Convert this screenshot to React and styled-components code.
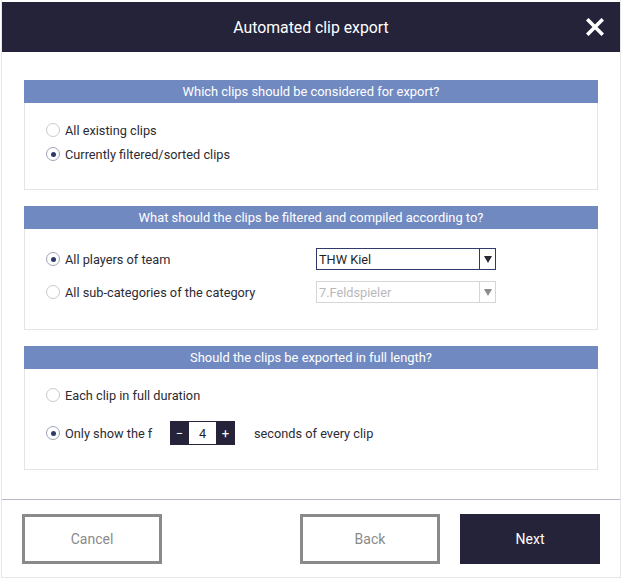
import React from 'react'
import styled, { createGlobalStyle } from 'styled-components'

const GlobalStyle = createGlobalStyle`
  body {
    margin: 0;
    background: #fff;
    font-family: Roboto, "Liberation Sans", Arial, sans-serif;
  }
`

const Dialog = styled.div`
  width: 620px;
  margin: 0 1px;
  box-sizing: border-box;
  border: 1px solid #e6e6e9;
  border-top: none;
  display: flex;
  flex-direction: column;
  background: #fff;
`

const TitleBar = styled.header`
  flex: none;
  margin-top: 2px;
  height: 50px;
  background: #24233a;
  color: #fff;
  display: flex;
  align-items: center;
  justify-content: center;
  position: relative;
  font-size: 15.8px;
`

const CloseButton = styled.button`
  position: absolute;
  right: 16px;
  top: 16px;
  width: 18px;
  height: 18px;
  padding: 0;
  border: none;
  background: none;
  cursor: pointer;
`

const Content = styled.div`
  padding: 28px 22px 0;
  display: flex;
  flex-direction: column;
  gap: 16px;
`

const Section = styled.section`
  display: flex;
  flex-direction: column;
`

const SectionTitle = styled.div`
  height: 23px;
  background: #7189c1;
  color: #fff;
  font-size: 12.9px;
  display: flex;
  align-items: center;
  justify-content: center;
`

const SectionBody = styled.div`
  border: 1px solid #e4e4e6;
  border-top: none;
  padding: ${p => p.$pad};
  display: flex;
  flex-direction: column;
  gap: ${p => p.$gap}px;
`

const Row = styled.div`
  display: flex;
  align-items: center;
  height: ${p => p.$h || 24}px;
  font-size: 12.75px;
  color: #2b2b33;
`

const Radio = styled.span`
  width: 14px;
  height: 14px;
  border-radius: 50%;
  box-sizing: border-box;
  border: 1px solid ${p => (p.$on ? '#9da3b8' : '#c9c9cf')};
  margin-left: 21px;
  margin-right: 5px;
  display: flex;
  align-items: center;
  justify-content: center;
  flex: none;

  &::after {
    content: '';
    width: 5px;
    height: 5px;
    border-radius: 50%;
    background: #2f3a6b;
    display: ${p => (p.$on ? 'block' : 'none')};
  }
`

const Label = styled.span`
  width: ${p => (p.$w ? `${p.$w}px` : 'auto')};
  flex: none;
`

const Select = styled.div`
  width: 180px;
  height: 22px;
  box-sizing: border-box;
  border: 1px solid ${p => (p.$disabled ? '#d6d6d8' : '#2f3a6b')};
  display: flex;
  align-items: center;
  font-size: 12.75px;
  color: ${p => (p.$disabled ? '#b8b8bc' : '#1f1f26')};
`

const SelectText = styled.span`
  flex: 1;
  padding-left: 2px;
`

const SelectArrow = styled.span`
  width: 15px;
  height: 100%;
  border-left: 1px solid ${p => (p.$disabled ? '#d6d6d8' : '#2f3a6b')};
  display: flex;
  align-items: center;
  justify-content: center;

  &::after {
    content: '';
    border-left: 4px solid transparent;
    border-right: 4px solid transparent;
    border-top: 7px solid ${p => (p.$disabled ? '#8c8c90' : '#2a2a33')};
  }
`

const Stepper = styled.div`
  display: flex;
  height: 24px;
  background: #24233a;
  margin-left: 16px;
  margin-right: 19px;
`

const StepButton = styled.span`
  width: 19px;
  color: #fff;
  display: flex;
  align-items: center;
  justify-content: center;
  font-size: 13px;
`

const StepValue = styled.span`
  width: 27px;
  margin: 1px 0;
  background: #fff;
  display: flex;
  align-items: center;
  justify-content: center;
  font-size: 12.75px;
  color: #1f1f26;
`

const Footer = styled.footer`
  flex: none;
  margin-top: 29px;
  border-top: 1px solid #b9b7c4;
  padding: 14px 20px 0 20px;
  height: 78px;
  box-sizing: border-box;
  display: flex;
  gap: 20px;
`

const Button = styled.button`
  width: 140px;
  height: 50px;
  box-sizing: border-box;
  font-family: inherit;
  font-size: 14px;
  border: ${p => (p.$primary ? 'none' : '3px solid #8a8a8a')};
  background: ${p => (p.$primary ? '#24233a' : '#fff')};
  color: ${p => (p.$primary ? '#fff' : '#8a8a8a')};
  margin-left: ${p => (p.$push ? 'auto' : '0')};
`

export default function App() {
  return (
    <>
      <GlobalStyle />
      <Dialog>
        <TitleBar>
          Automated clip export
          <CloseButton aria-label="close">
            <svg width="18" height="18" viewBox="0 0 18 18">
              <path d="M2.5 2.5 L15.5 15.5 M15.5 2.5 L2.5 15.5" stroke="#fff" strokeWidth="3.6" strokeLinecap="square" />
            </svg>
          </CloseButton>
        </TitleBar>

        <Content>
          <Section>
            <SectionTitle>Which clips should be considered for export?</SectionTitle>
            <SectionBody $pad="15px 0 23px" $gap={0}>
              <Row><Radio />All existing clips</Row>
              <Row><Radio $on />Currently filtered/sorted clips</Row>
            </SectionBody>
          </Section>

          <Section>
            <SectionTitle>What should the clips be filtered and compiled according to?</SectionTitle>
            <SectionBody $pad="19px 0 26px" $gap={11}>
              <Row $h={22}>
                <Radio $on />
                <Label $w={251}>All players of team</Label>
                <Select>
                  <SelectText>THW Kiel</SelectText>
                  <SelectArrow />
                </Select>
              </Row>
              <Row $h={22}>
                <Radio />
                <Label $w={251}>All sub-categories of the category</Label>
                <Select $disabled>
                  <SelectText>7.Feldspieler</SelectText>
                  <SelectArrow $disabled />
                </Select>
              </Row>
            </SectionBody>
          </Section>

          <Section>
            <SectionTitle>Should the clips be exported in full length?</SectionTitle>
            <SectionBody $pad="14px 0 24px" $gap={14}>
              <Row><Radio />Each clip in full duration</Row>
              <Row>
                <Radio $on />
                <Label $w={89}>Only show the f</Label>
                <Stepper>
                  <StepButton>−</StepButton>
                  <StepValue>4</StepValue>
                  <StepButton>+</StepButton>
                </Stepper>
                seconds of every clip
              </Row>
            </SectionBody>
          </Section>
        </Content>

        <Footer>
          <Button>Cancel</Button>
          <Button $push>Back</Button>
          <Button $primary>Next</Button>
        </Footer>
      </Dialog>
    </>
  )
}
